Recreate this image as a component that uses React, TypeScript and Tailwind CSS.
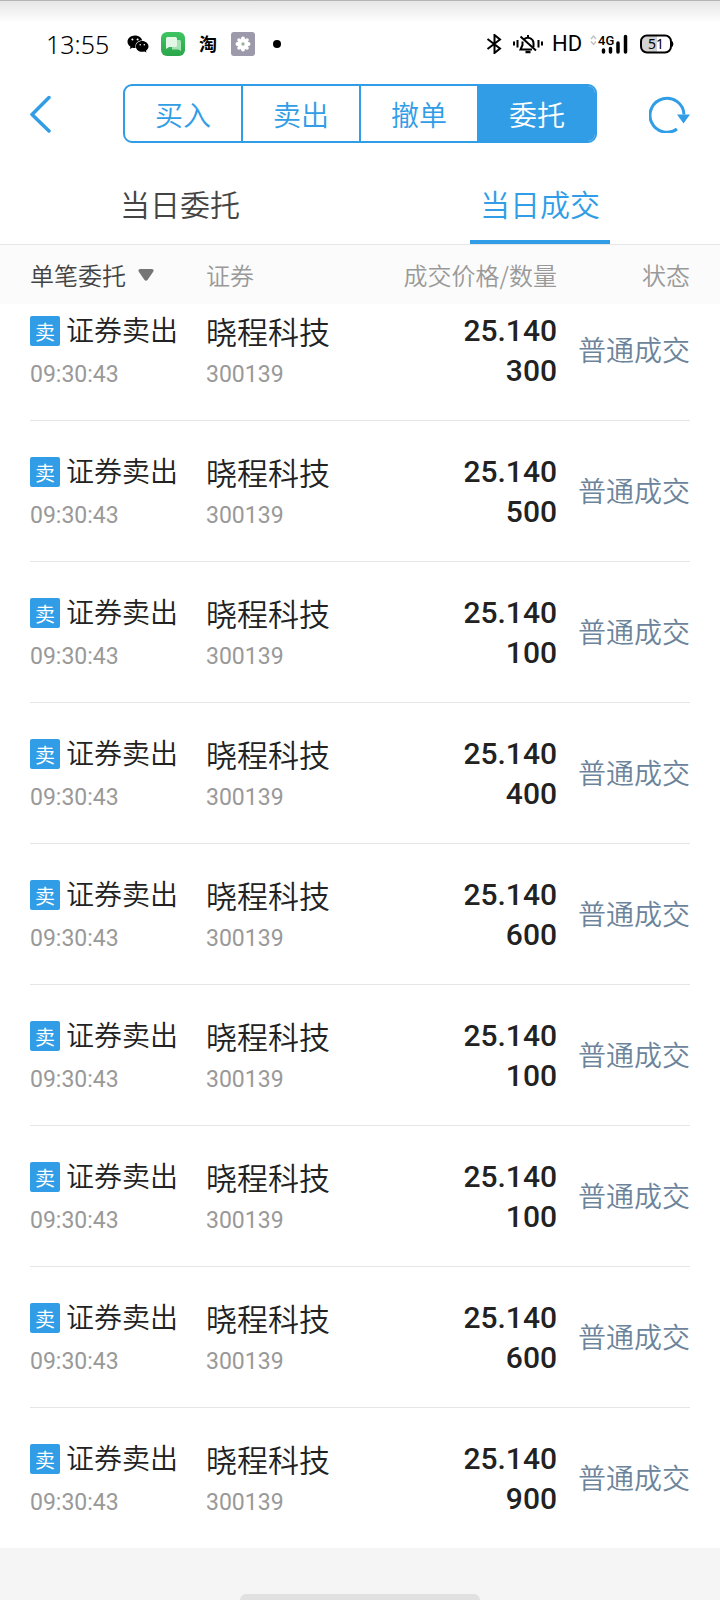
import { useState } from 'react';
import { FaWeixin } from 'react-icons/fa';

const trades = [
    { id: 1, time: '09:30:43', name: '晓程科技', code: '300139', price: '25.140', amount: 300 },
    { id: 2, time: '09:30:43', name: '晓程科技', code: '300139', price: '25.140', amount: 500 },
    { id: 3, time: '09:30:43', name: '晓程科技', code: '300139', price: '25.140', amount: 100 },
    { id: 4, time: '09:30:43', name: '晓程科技', code: '300139', price: '25.140', amount: 400 },
    { id: 5, time: '09:30:43', name: '晓程科技', code: '300139', price: '25.140', amount: 600 },
    { id: 6, time: '09:30:43', name: '晓程科技', code: '300139', price: '25.140', amount: 100 },
    { id: 7, time: '09:30:43', name: '晓程科技', code: '300139', price: '25.140', amount: 100 },
    { id: 8, time: '09:30:43', name: '晓程科技', code: '300139', price: '25.140', amount: 600 },
    { id: 9, time: '09:30:43', name: '晓程科技', code: '300139', price: '25.140', amount: 900 },
];

const sections = ['买入', '卖出', '撤单', '委托'];
const tabs = ['当日委托', '当日成交'];

function StatusBar() {
    return (
        <div className="h-[84px] pt-0.5 pl-[46px] pr-[46px] flex items-center justify-between text-black border-t border-[#b4b4b4] bg-linear-to-b from-[#e6e6e6] to-white to-[22px]">
            <div className="flex items-center">
                <span className="w-[81px] text-[25px] font-light leading-6 font-['Noto_Sans',sans-serif]">13:55</span>
                <FaWeixin className="w-[22px] h-6" />
                {/* Messages */}
                <svg className="ml-3 w-6 h-6" viewBox="0 0 24 24">
                    <defs>
                        <linearGradient id="msg" x1="0" y1="0" x2="0" y2="1">
                            <stop offset="0" stopColor="#40c463" />
                            <stop offset="1" stopColor="#2ba64c" />
                        </linearGradient>
                    </defs>
                    <rect width="24" height="24" rx="6" fill="url(#msg)" />
                    <path d="M11 8h7.500a1.500 1.500 0 0 1 1.500 1.500V19l-2.500-1.500H11z" fill="#a5e2b4" />
                    <path d="M6.500 5h8A1.500 1.500 0 0 1 16 6.500v7a1.500 1.500 0 0 1-1.500 1.500H8l-3 2V6.500A1.500 1.500 0 0 1 6.500 5z" fill="#e3f7e7" />
                </svg>
                <span className="ml-3.5 pb-0.5 text-lg font-bold leading-6">淘</span>
                {/* Settings */}
                <svg className="ml-3.5 w-6 h-6" viewBox="0 0 24 24">
                    <rect width="24" height="24" rx="3" fill="#9c99aa" />
                    <circle cx="12" cy="12" r="5.500" fill="#fff" />
                    <g fill="#fff">
                        <circle cx="12" cy="6.500" r="2" />
                        <circle cx="12" cy="17.500" r="2" />
                        <circle cx="6.500" cy="12" r="2" />
                        <circle cx="17.500" cy="12" r="2" />
                        <circle cx="8" cy="8" r="1.800" />
                        <circle cx="16" cy="8" r="1.800" />
                        <circle cx="8" cy="16" r="1.800" />
                        <circle cx="16" cy="16" r="1.800" />
                    </g>
                    <circle cx="12" cy="12" r="1.700" fill="#9fb09f" />
                </svg>
                <span className="ml-[18px] w-2 h-2 rounded-full bg-black" />
            </div>
            <div className="flex items-center">
                {/* Bluetooth */}
                <svg className="w-4 h-5" viewBox="0 0 16 20" fill="none" stroke="currentColor" strokeWidth="2">
                    <path d="M1.500 5l12.500 9.500L8.500 19V1L14 5.500 1.500 15" />
                </svg>
                {/* Vibrate, bell off */}
                <svg className="ml-2.5 w-8 h-5" viewBox="0 0 32 20" fill="none" stroke="currentColor" strokeWidth="2">
                    <path d="M2 7.500v4M5.500 6v7.500M26.500 6v7.500M30 7.500v4" />
                    <path d="M12 5.500a5.500 5.500 0 0 1 9.500 3.500v4M10.500 7.500V11l-2 4.500H20M16 1v2.500" />
                    <path d="M8.500 2.500L24 16.500" />
                    <path d="M13.500 18h5" strokeWidth="2.500" />
                </svg>
                <span className="ml-2 w-[30px] text-[22px] leading-6 font-['Roboto',sans-serif]">HD</span>
                {/* Mobile network */}
                <svg className="ml-2 w-[38px] h-5" viewBox="0 0 38 20">
                    <path d="M1 5l2.500-3L6 5M1 7.500l2.500 3 2.500-3" fill="none" stroke="#bdbdbd" strokeWidth="1.200" />
                    <text x="8" y="10.500" fontFamily="Roboto, sans-serif" fontSize="13" fontWeight="500">4G</text>
                    <g stroke="currentColor" strokeWidth="3.500" strokeLinecap="round">
                        <path d="M13.500 16v2M20.500 14.500v3.500M28 9v9M35.500 2.500V18" />
                    </g>
                </svg>
                {/* Battery */}
                <svg className="ml-3 w-[34px] h-5" viewBox="0 0 34 20">
                    <path d="M7 2h10v16H7a5 5 0 0 1-5-5V7a5 5 0 0 1 5-5z" fill="#d3d3d3" />
                    <rect x="1" y="1.500" width="30" height="17" rx="6" fill="none" stroke="currentColor" strokeWidth="2" />
                    <path d="M32 7.500q2 2.500 0 5z" fill="currentColor" stroke="currentColor" />
                    <text x="16" y="15" textAnchor="middle" fontFamily="Noto Sans, sans-serif" fontSize="14">51</text>
                </svg>
            </div>
        </div>
    );
}

export default function App() {
    const [section, setSection] = useState('委托');
    const [tab, setTab] = useState('当日成交');

    return (
        <div className="min-h-screen flex flex-col bg-[#f5f5f5] text-[#222] font-['Noto_Sans_CJK_SC',sans-serif]">
            <header className="bg-white">
                <StatusBar />
                <nav className="px-[29px] flex items-center justify-between">
                    <button type="button" aria-label="返回" className="w-[42px]">
                        <svg className="w-[22px] h-[38px]" viewBox="0 0 22 38" fill="none" stroke="#309de6" strokeWidth="3.500" strokeLinecap="round" strokeLinejoin="round">
                            <path d="M20 2.500L3 19.500 20 36" />
                        </svg>
                    </button>
                    <div className="w-[474px] h-[59px] flex border-2 border-[#309de6] rounded-[9px] overflow-hidden divide-x-2 divide-[#309de6]">
                        {sections.map((s) => (
                            <button
                                key={s}
                                type="button"
                                onClick={() => setSection(s)}
                                className={`flex-1 text-[28px] leading-10 font-[350] ${s === section ? 'bg-[#309de6] text-white' : 'text-[#309de6]'}`}
                            >
                                {s}
                            </button>
                        ))}
                    </div>
                    <button type="button" aria-label="刷新">
                        <svg className="w-[42px] h-[38px]" viewBox="0 0 42 38" fill="none" stroke="#309de6" strokeWidth="3">
                            <path d="M28 34A17 17 0 1 1 35 19.500" />
                            <path d="M28 19.500h13l-6.500 9z" fill="#309de6" stroke="none" />
                        </svg>
                    </button>
                </nav>
                <div role="tablist" className="mt-[25px] h-[77px] flex border-b border-[#e6e6e6]">
                    {tabs.map((t) => (
                        <button
                            key={t}
                            type="button"
                            role="tab"
                            aria-selected={t === tab}
                            onClick={() => setTab(t)}
                            className="flex-1 flex justify-center text-[30px] font-[350]"
                        >
                            <span className={`h-full w-[140px] leading-[70px] border-b-4 ${t === tab ? 'text-[#309de6] border-[#309de6]' : 'text-[#444] border-transparent'}`}>
                                {t}
                            </span>
                        </button>
                    ))}
                </div>
            </header>

            <table className="block bg-white">
                <thead className="block bg-[#fbfbfb] text-2xl leading-[59px] text-[#999]">
                    <tr className="mx-[30px] grid grid-cols-[176px_1fr_160px_133px] *:font-[350]">
                        <th className="flex items-center text-left">
                            <select aria-label="委托类型" className="appearance-none text-[#444] h-[59px] w-[108px]">
                                <option>单笔委托</option>
                            </select>
                            <svg className="w-4 h-3" viewBox="0 0 16 12">
                                <path d="M2 0h12q2.500.500 1 3L9.500 11q-1.500 1.500-3 0L1 3q-1.500-2.500 1-3z" fill="#757575" />
                            </svg>
                        </th>
                        <th className="text-left">证券</th>
                        <th className="text-right whitespace-nowrap">成交价格/数量</th>
                        <th className="text-right">状态</th>
                    </tr>
                </thead>
                <tbody className="block">
                    {trades.map((t) => (
                        <tr
                            key={t.id}
                            className="mx-[30px] pt-[31px] first:pt-[7px] pb-[25px] grid grid-cols-[176px_1fr_160px_133px] border-b border-[#e6e6e6] last:border-b-0"
                        >
                            <td>
                                <div className="h-10 flex items-center gap-1.5 text-[28px] whitespace-nowrap">
                                    <span className="w-[30px] h-[30px] rounded-xs bg-[#309de6] text-white text-xl leading-8 text-center">卖</span>
                                    <span className="pb-1 leading-9 font-[350]">证券卖出</span>
                                </div>
                                <div className="mt-1 text-[23px] leading-10 text-[#999] font-['Roboto',sans-serif]">{t.time}</div>
                            </td>
                            <td>
                                <div className="text-[31px] leading-10 font-[350]">{t.name}</div>
                                <div className="mt-1 text-[23px] leading-10 text-[#999] font-['Roboto',sans-serif]">{t.code}</div>
                            </td>
                            <td className="text-right text-[30px] leading-10 font-medium font-['Roboto',sans-serif]">
                                <div>{t.price}</div>
                                <div>{t.amount}</div>
                            </td>
                            <td className="text-right text-[28px] leading-[76px] font-[350] text-[#6c849b]">普通成交</td>
                        </tr>
                    ))}
                </tbody>
            </table>

            <footer className="flex-1 min-h-[52px] flex items-end justify-center">
                <div className="w-60 h-1.5 rounded-t-md bg-[#e1e1e1]" />
            </footer>
        </div>
    );
}
